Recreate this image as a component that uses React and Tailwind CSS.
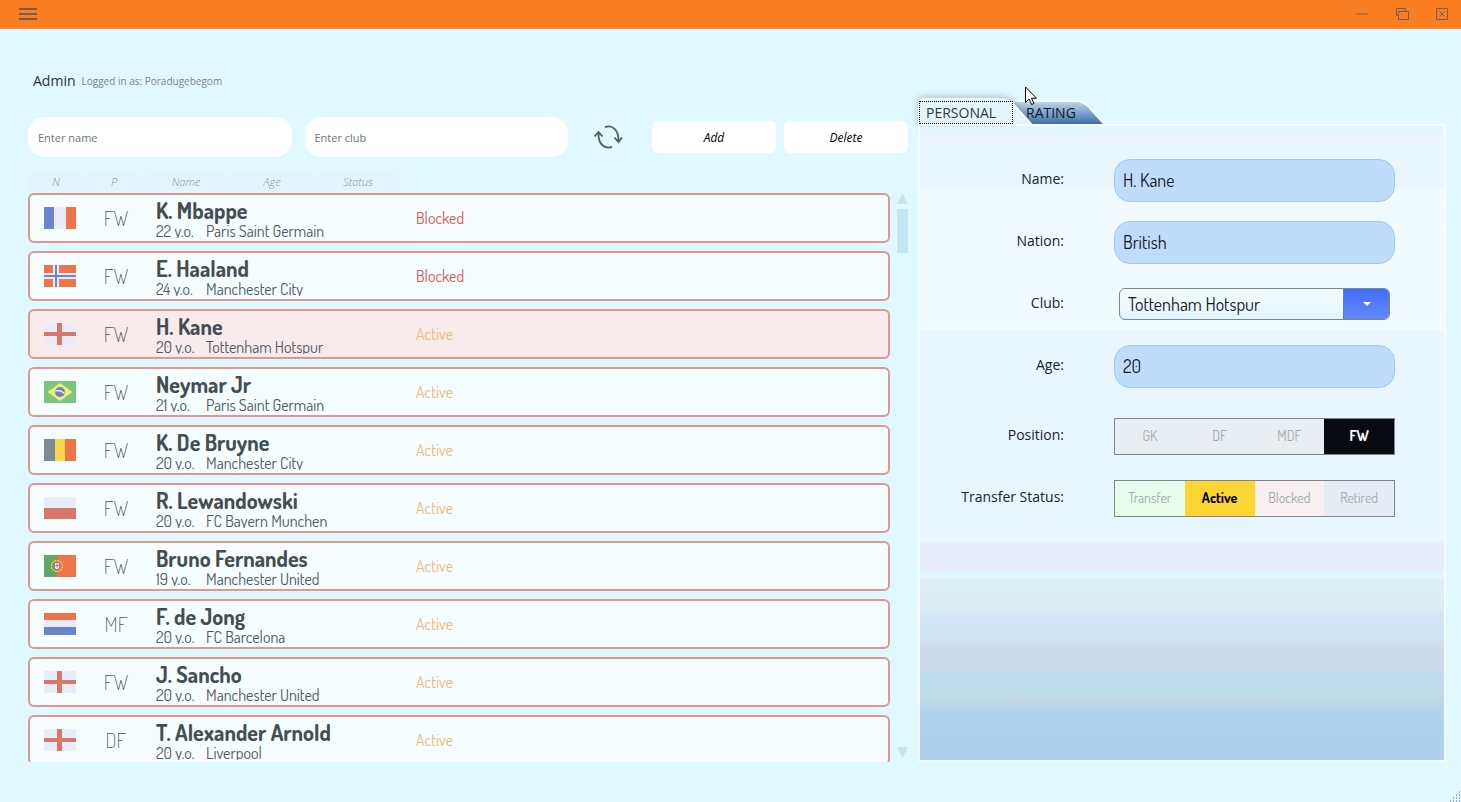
import React from "react";

const flagBase = "block w-8 h-[22px] shrink-0";

function Flag({ code }) {
  return (
    <svg className={flagBase} viewBox="0 0 32 22" role="img" aria-label={code}>
      {code === "France" && (
        <>
          <path fill="#6c84cc" d="M0 0h10v22H0z" />
          <path fill="#e8edf7" d="M10 0h12v22H10z" />
          <path fill="#ed7549" d="M22 0h10v22H22z" />
        </>
      )}
      {code === "Norway" && (
        <>
          <path fill="#ed7549" d="M0 0h32v22H0z" />
          <path fill="#e8edf7" d="M9 0h6v22H9zM0 8h32v6H0z" />
          <path fill="#6c84cc" d="M11 0h2v22h-2zM0 10h32v2H0z" />
        </>
      )}
      {code === "England" && (
        <>
          <path fill="#e8edf7" d="M0 0h32v22H0z" />
          <path fill="#d7776b" d="M13 0h5v22h-5zM0 9h32v4H0z" />
        </>
      )}
      {code === "Brazil" && (
        <>
          <path fill="#7bc67e" d="M0 0h32v22H0z" />
          <path fill="#f5ee6e" d="M16 2l12.500 9L16 20 3.500 11z" />
          <circle cx="16" cy="11" r="5" fill="#6c84cc" />
          <path d="M11.200 9.800c3.500-.6 7 .3 9.500 2.800" stroke="#eef3f7" strokeWidth="1.200" fill="none" />
        </>
      )}
      {code === "Belgium" && (
        <>
          <path fill="#7b8b96" d="M0 0h11v22H0z" />
          <path fill="#fbd34c" d="M11 0h10v22H11z" />
          <path fill="#ed7549" d="M21 0h11v22H21z" />
        </>
      )}
      {code === "Poland" && (
        <>
          <path fill="#e8edf7" d="M0 0h32v11H0z" />
          <path fill="#d7776b" d="M0 11h32v11H0z" />
        </>
      )}
      {code === "Portugal" && (
        <>
          <path fill="#62a567" d="M0 0h13v22H0z" />
          <path fill="#ed7549" d="M13 0h19v22H13z" />
          <circle cx="13" cy="11" r="5.500" fill="none" stroke="#f1dc5c" strokeWidth="1.200" strokeDasharray="2 .8" />
          <path fill="#d7605a" d="M10 7h6v5.500a3 3 0 0 1-6 0z" />
          <path fill="#eef3f7" d="M11 8h4v4.200a2 2 0 0 1-4 0z" />
          <path fill="#6c84cc" d="M12.500 8.500h1v4h-1zM11.500 10h3v1h-3z" />
        </>
      )}
      {code === "Netherlands" && (
        <>
          <path fill="#ed7549" d="M0 0h32v7H0z" />
          <path fill="#e8edf7" d="M0 7h32v7H0z" />
          <path fill="#6c84cc" d="M0 14h32v8H0z" />
        </>
      )}
    </svg>
  );
}

const players = [
  ["France", "FW", "K. Mbappe", 22, "Paris Saint Germain", "Blocked"],
  ["Norway", "FW", "E. Haaland", 24, "Manchester City", "Blocked"],
  ["England", "FW", "H. Kane", 20, "Tottenham Hotspur", "Active"],
  ["Brazil", "FW", "Neymar Jr", 21, "Paris Saint Germain", "Active"],
  ["Belgium", "FW", "K. De Bruyne", 20, "Manchester City", "Active"],
  ["Poland", "FW", "R. Lewandowski", 20, "FC Bayern Munchen", "Active"],
  ["Portugal", "FW", "Bruno Fernandes", 19, "Manchester United", "Active"],
  ["Netherlands", "MF", "F. de Jong", 20, "FC Barcelona", "Active"],
  ["England", "FW", "J. Sancho", 20, "Manchester United", "Active"],
  ["England", "DF", "T. Alexander Arnold", 20, "Liverpool", "Active"],
];

const narrow = "font-['Dosis','Liberation_Sans_Narrow','Lato',sans-serif]";

function PlayerRow({ player, selected }) {
  const [nation, position, name, age, club, status] = player;
  return (
    <li>
      <button
        type="button"
        aria-pressed={selected}
        className={`flex h-[50px] w-full items-center overflow-hidden rounded-md border-2 border-[#e09791] pl-[14px] text-left ${narrow} ${selected ? "bg-[#f7ebec]" : "bg-[#f5fdff]"}`}
      >
        <Flag code={nation} />
        <span className="w-20 text-center text-xl font-extralight text-[#4b5458]">{position}</span>
        <span className="flex w-[260px] flex-col self-start pt-[2px]">
          <span className="h-[26px] text-[22px] leading-[26px] font-bold whitespace-nowrap text-[#444e52]">{name}</span>
          <span className="flex h-[15px] overflow-hidden text-base leading-4 whitespace-nowrap text-[#50595d]">
            <span className="w-[50px]">{age} y.o.</span>
            <span>{club}</span>
          </span>
        </span>
        <span className={`text-base ${status === "Blocked" ? "text-[#e0544f]" : "text-[#efb978]"}`}>{status}</span>
      </button>
    </li>
  );
}

const headings = [
  ["N", "w-14"],
  ["P", "w-14"],
  ["Name", "w-[84px]"],
  ["Age", "w-[84px]"],
  ["Status", "w-[84px]"],
];

function TitleBar() {
  return (
    <header className="flex h-[29px] shrink-0 items-center justify-between border-b border-[#fb8f45] bg-[#f97d21] px-3 text-[#7d5a50]">
      <button type="button" aria-label="Menu" className="px-[7px]">
        <svg className="block h-[14px] w-[18px]" viewBox="0 0 18 14" fill="none" stroke="currentColor" strokeWidth="2">
          <path d="M0 2h18M0 7h18M0 12h18" />
        </svg>
      </button>
      <div className="flex gap-[26px]">
        <button type="button" aria-label="Minimize">
          <svg className="block size-[14px]" viewBox="0 0 14 14" fill="none" stroke="currentColor">
            <path d="M1 7.500l1-1 1 1 1-1 1 1 1-1 1 1 1-1 1 1 1-1 1 1 1-1 1 1" />
          </svg>
        </button>
        <button type="button" aria-label="Restore">
          <svg className="block size-[14px]" viewBox="0 0 14 14" fill="none" stroke="currentColor">
            <path d="M3.500 8.500h-2v-7h9v3M3.500 4.500h10v8h-10z" />
          </svg>
        </button>
        <button type="button" aria-label="Close">
          <svg className="block size-[14px]" viewBox="0 0 14 14" fill="none" stroke="currentColor">
            <path d="M1.500 1.500h11v11h-11zM4.500 4.500l5 5M9.500 4.500l-5 5" />
          </svg>
        </button>
      </div>
    </header>
  );
}

const labelStyle = "pb-[2px] text-right text-sm text-[#1c2326]";

function Field({ label, id, children }) {
  return (
    <>
      <label htmlFor={id} className={labelStyle}>{label}</label>
      <div>{children}</div>
    </>
  );
}

const inputStyle = `block h-[43px] w-full rounded-2xl border border-[#9ecaec] bg-[#bfddfb] px-2 text-lg text-[#12181c] outline-none ${narrow}`;

function Segments({ name, options, value }) {
  return (
    <div role="radiogroup" aria-label={name} className={`grid h-[37px] grid-cols-4 border border-[#7d8589] text-sm ${narrow}`}>
      {options.map(([text, tone]) => (
        <label key={text} className={`relative flex items-center justify-center ${tone}`}>
          <input type="radio" name={name} defaultChecked={text === value} className="sr-only" />
          {text}
        </label>
      ))}
    </div>
  );
}

const formGrid = "grid grid-cols-[144px_1fr] auto-rows-[62px] items-center gap-x-[50px]";

export default function App() {
  return (
    <div className="relative flex h-screen min-h-[400px] flex-col bg-[#e0f8ff] font-['Open_Sans','Noto_Sans',sans-serif]">
      <TitleBar />
      <main className="grid min-h-0 flex-1 grid-cols-[5fr_3fr] gap-[10px] pr-[15px] pb-10 pl-7">
        <section className="flex min-h-0 min-w-0 flex-col pt-10">
          <div className="flex h-6 items-center gap-[6px] pl-[5px]">
            <h1 className="text-sm text-[#2b3338]">Admin</h1>
            <p className="text-[10px] text-[#78848a]">Logged in as: Poradugebegom</p>
          </div>
          <div className="mt-6 flex items-center">
            <input aria-label="Enter name" placeholder="Enter name" className="h-10 min-w-0 flex-1 rounded-2xl bg-white px-[10px] text-[11px] outline-none placeholder:text-[#6c777d]" />
            <input aria-label="Enter club" placeholder="Enter club" className="ml-[13px] h-10 min-w-0 flex-1 rounded-2xl bg-white px-[10px] text-[11px] outline-none placeholder:text-[#6c777d]" />
            <button type="button" aria-label="Refresh" className="mx-6 px-[1px] text-[#555c60]">
              <svg className="block h-7 w-[30px]" viewBox="0 0 30 28" fill="none" stroke="currentColor" strokeWidth="1.800">
                <path d="M12 4.200C19 1.500 26 6.500 25.500 18.500M21.500 14.500l4 4.500 3.500-4.500" />
                <path d="M19 23.800C12 26.500 5 21.500 5.500 10M1.500 13.500l4-4.500 4 4.500" />
              </svg>
            </button>
            <button type="button" className="ml-1 h-8 w-[124px] rounded-md bg-white pt-[2px] text-xs text-black italic">Add</button>
            <button type="button" className="ml-2 h-8 w-[124px] rounded-md bg-white pt-[2px] text-xs text-black italic">Delete</button>
          </div>
          <div className="mt-4 flex gap-[2px] text-[11px] leading-[18px] font-light text-[#84939a] italic">
            {headings.map(([text, width]) => (
              <span key={text} className={`${width} h-[18px] rounded bg-[#e2f5fd] text-center`}>{text}</span>
            ))}
          </div>
          <div className="mt-[2px] flex min-h-0 flex-1 gap-[7px]">
            <ul className="flex min-w-0 flex-1 flex-col gap-2 overflow-hidden">
              {players.map((player) => (
                <PlayerRow key={player[2]} player={player} selected={player[2] === "H. Kane"} />
              ))}
            </ul>
            <div className="flex w-[11px] flex-col items-center" aria-hidden="true">
              <svg className="block h-[11px] w-[11px]" viewBox="0 0 11 11"><path fill="#c2e6f3" d="M5.500 0L11 11H0z" /></svg>
              <div className="mt-[5px] h-11 w-full bg-[#c2e6f3]" />
              <svg className="mt-auto mb-1 block h-[11px] w-[11px]" viewBox="0 0 11 11"><path fill="#c2e6f3" d="M0 0h11L5.500 11z" /></svg>
            </div>
          </div>
        </section>

        <section className="flex min-h-0 min-w-0 flex-col pt-[69px]">
          <div role="tablist" className="flex h-[26px] items-stretch text-sm">
            <button type="button" role="tab" aria-selected="true" className="relative z-10 w-24 text-[#2f3639]">
              <svg className="absolute top-0 left-0 h-[26px] w-[116px] overflow-visible" viewBox="0 0 116 26" aria-hidden="true">
                <path
                  d="M1 27V6Q1 1 6 1H82Q91 1 97 8L114 27Z"
                  fill="#e4f6fd"
                  stroke="#f5fcff"
                  strokeWidth="2"
                  className="drop-shadow-[0_-1px_3px_rgba(100,130,145,0.5)]"
                />
              </svg>
              <span className="relative mt-[3px] mr-[1px] ml-[1px] flex h-[23px] items-center border border-dotted border-black pl-[6px] leading-5">PERSONAL</span>
            </button>
            <button type="button" role="tab" aria-selected="false" className="relative w-[92px] pt-[3px] pl-3 text-left text-[#101820]">
              <svg className="absolute inset-0 z-0 h-full w-full" viewBox="0 0 92 26" aria-hidden="true">
                <defs>
                  <linearGradient id="tabFill" x1="0" y1="0" x2="0" y2="1">
                    <stop offset="0" stopColor="#c3d8ec" />
                    <stop offset="0.500" stopColor="#7ea2cb" />
                    <stop offset="1" stopColor="#3967a5" />
                  </linearGradient>
                </defs>
                <path d="M-4 3H62Q69 3 75 9L91 27H-4Z" fill="url(#tabFill)" stroke="#f5fcff" strokeWidth="2" />
              </svg>
              <span className="relative leading-5">RATING</span>
            </button>
          </div>
          <div className="relative z-20 min-h-0 flex-1 overflow-hidden border-2 border-[#f5fcff] bg-[linear-gradient(to_bottom,#e0f5fc_0px,#e9f6fd_12px,#e9f6fd_62px,#f1faff_63px,#f2fbff_204px,#eaf6fe_205px,#eaf6fe_416px,#e7edf9_416px,#e7edf9_445px,#e0f7ff_445px,#e0f7ff_453px,#deeff6_453px,#dbeef4_482px,#d3e6f5_488px,#cce4f4_512px,#cbdcec_522px,#cddaf0_540px,#c0ddf0_548px,#bfdce9_570px,#c0d6e5_578px,#b4d4ec_582px,#b0d2ee_594px,#aed0ec_634px)]">
            <form className="pt-[23px] pr-[49px]">
              <div className={formGrid}>
                <Field label="Name:" id="name"><input id="name" defaultValue="H. Kane" className={inputStyle} /></Field>
                <Field label="Nation:" id="nation"><input id="nation" defaultValue="British" className={inputStyle} /></Field>
                <Field label="Club:" id="club">
                  <div className={`relative mx-[5px] flex h-8 overflow-hidden rounded-md border border-[#78878f] bg-linear-to-b from-[#f3fbff] to-[#e2f6fe] ${narrow}`}>
                    <select id="club" defaultValue="Tottenham Hotspur" className="w-full appearance-none pl-2 text-lg leading-7 text-[#12181c] outline-none">
                      <option>Tottenham Hotspur</option>
                    </select>
                    <span className="pointer-events-none flex w-[46px] shrink-0 items-center justify-center border-l border-[#6c7a9c] bg-linear-to-b from-[#426df8] to-[#6389fb]">
                      <svg className="h-1 w-2" viewBox="0 0 8 4"><path fill="#fff" d="M0 0h8L4 4z" /></svg>
                    </span>
                  </div>
                </Field>
                <Field label="Age:" id="age"><input id="age" defaultValue="20" className={inputStyle} /></Field>
              </div>
              <div className={`mt-2 ${formGrid}`}>
                <span className={labelStyle}>Position:</span>
                <Segments
                  name="Position"
                  value="FW"
                  options={[
                    ["GK", "bg-[#e8eef1] text-[#a2abae]"],
                    ["DF", "bg-[#e8eef1] text-[#a2abae]"],
                    ["MDF", "bg-[#e8eef1] text-[#a2abae]"],
                    ["FW", "bg-[#080b10] font-bold text-white"],
                  ]}
                />
                <span className={labelStyle}>Transfer Status:</span>
                <Segments
                  name="Transfer Status"
                  value="Active"
                  options={[
                    ["Transfer", "bg-[#e6fdec] text-[#a2abae]"],
                    ["Active", "bg-[#fcd534] font-bold text-black"],
                    ["Blocked", "bg-[#f7eff0] text-[#a2abae]"],
                    ["Retired", "bg-[#e6ecf4] text-[#a2abae]"],
                  ]}
                />
              </div>
            </form>
          </div>
        </section>
      </main>
      <svg className="pointer-events-none absolute top-[86px] left-[1025px] z-30 h-5 w-3" viewBox="0 0 12 20" aria-hidden="true">
        <path d="M.5 1v15.500l3.600-3.500 2.500 5.500 2.300-1-2.400-5.300h5z" fill="#fff" stroke="#000" />
      </svg>
      <svg className="absolute right-0 bottom-0 h-[12px] w-[12px]" viewBox="0 0 12 12" aria-hidden="true">
        <path fill="#9aacb8" d="M10 1h1v2h-1zM7 4h1v2h-1zM10 4h1v2h-1zM4 7h1v2h-1zM7 7h1v2h-1zM10 7h1v2h-1zM1 10h1v2h-1zM4 10h1v2h-1zM7 10h1v2h-1zM10 10h1v2h-1z" />
      </svg>
    </div>
  );
}
